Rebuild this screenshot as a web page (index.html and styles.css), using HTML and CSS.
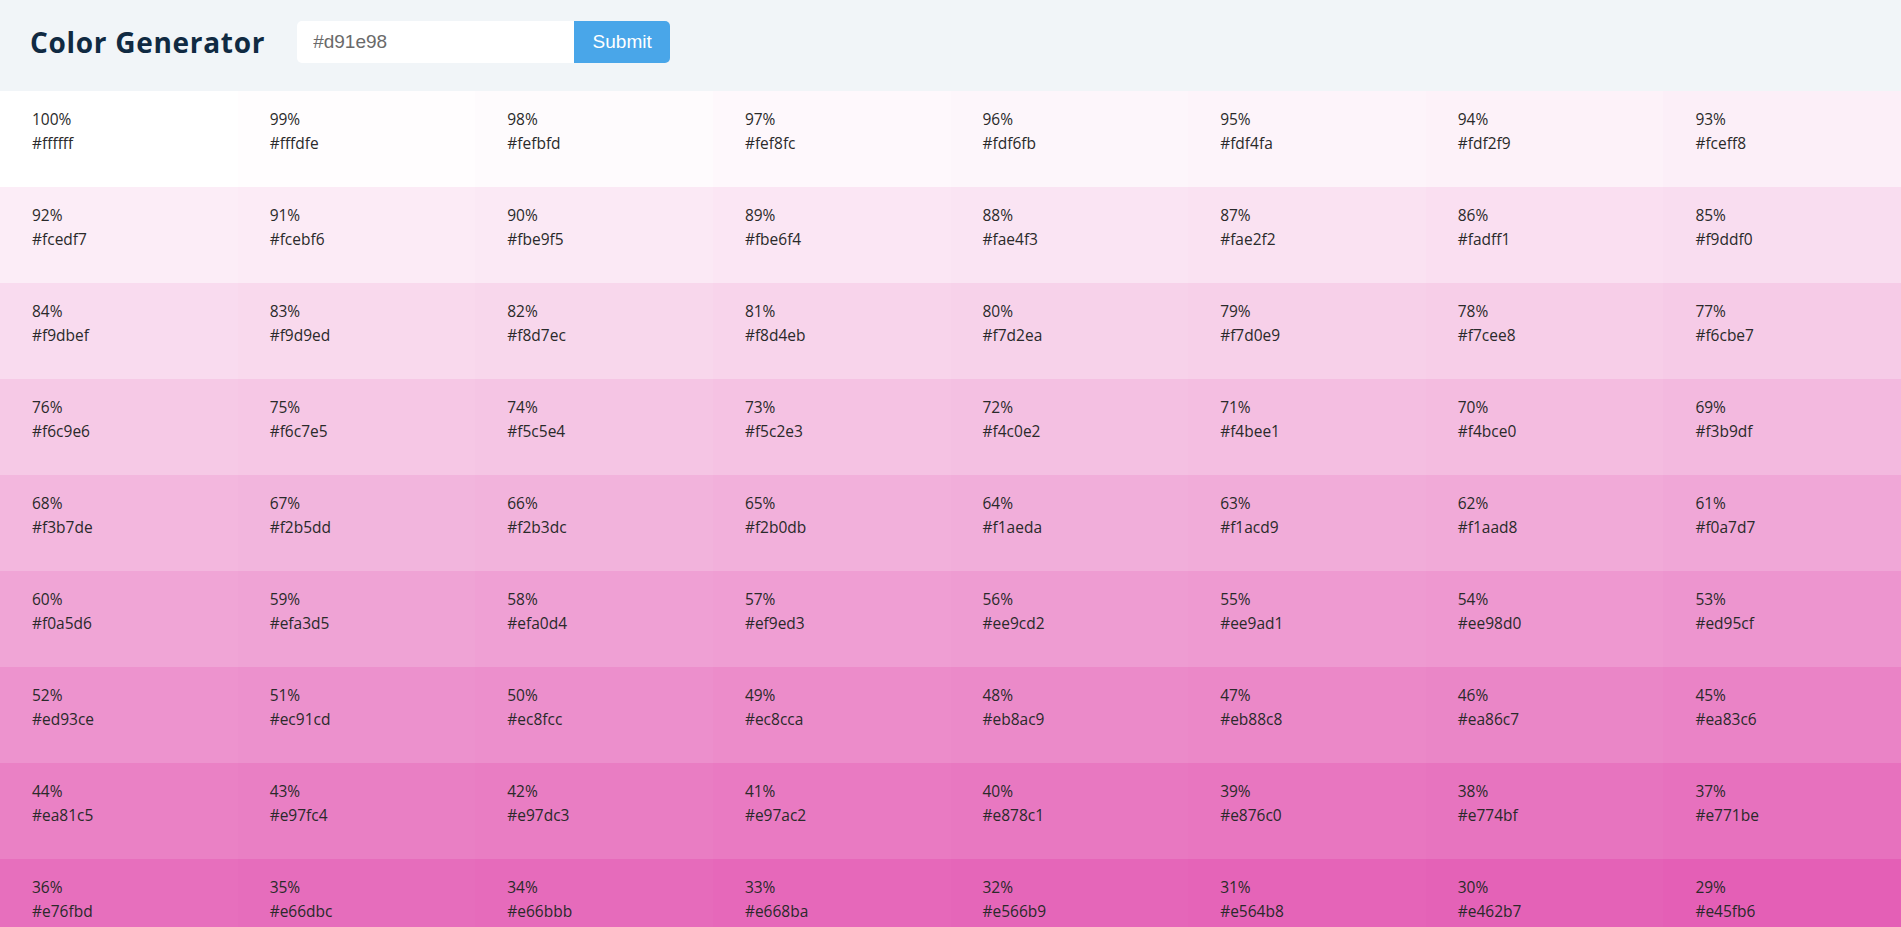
FILE: index.html
```html
<!DOCTYPE html>
<html lang="en">
<head>
<meta charset="utf-8">
<title>Color Generator</title>
<link rel="stylesheet" href="styles.css">
</head>
<body>
<section class="header">
  <h3 class="title">Color Generator</h3>
  <form class="form">
    <input class="color-input" type="text" value="#d91e98">
    <button class="btn" type="button">Submit</button>
  </form>
</section>
<section class="colors">
  <article class="color" style="background:#ffffff"><p class="pct">100%</p><p class="hex">#ffffff</p></article>
  <article class="color" style="background:#fffdfe"><p class="pct">99%</p><p class="hex">#fffdfe</p></article>
  <article class="color" style="background:#fefbfd"><p class="pct">98%</p><p class="hex">#fefbfd</p></article>
  <article class="color" style="background:#fef8fc"><p class="pct">97%</p><p class="hex">#fef8fc</p></article>
  <article class="color" style="background:#fdf6fb"><p class="pct">96%</p><p class="hex">#fdf6fb</p></article>
  <article class="color" style="background:#fdf4fa"><p class="pct">95%</p><p class="hex">#fdf4fa</p></article>
  <article class="color" style="background:#fdf2f9"><p class="pct">94%</p><p class="hex">#fdf2f9</p></article>
  <article class="color" style="background:#fceff8"><p class="pct">93%</p><p class="hex">#fceff8</p></article>

  <article class="color" style="background:#fcedf7"><p class="pct">92%</p><p class="hex">#fcedf7</p></article>
  <article class="color" style="background:#fcebf6"><p class="pct">91%</p><p class="hex">#fcebf6</p></article>
  <article class="color" style="background:#fbe9f5"><p class="pct">90%</p><p class="hex">#fbe9f5</p></article>
  <article class="color" style="background:#fbe6f4"><p class="pct">89%</p><p class="hex">#fbe6f4</p></article>
  <article class="color" style="background:#fae4f3"><p class="pct">88%</p><p class="hex">#fae4f3</p></article>
  <article class="color" style="background:#fae2f2"><p class="pct">87%</p><p class="hex">#fae2f2</p></article>
  <article class="color" style="background:#fadff1"><p class="pct">86%</p><p class="hex">#fadff1</p></article>
  <article class="color" style="background:#f9ddf0"><p class="pct">85%</p><p class="hex">#f9ddf0</p></article>

  <article class="color" style="background:#f9dbef"><p class="pct">84%</p><p class="hex">#f9dbef</p></article>
  <article class="color" style="background:#f9d9ed"><p class="pct">83%</p><p class="hex">#f9d9ed</p></article>
  <article class="color" style="background:#f8d7ec"><p class="pct">82%</p><p class="hex">#f8d7ec</p></article>
  <article class="color" style="background:#f8d4eb"><p class="pct">81%</p><p class="hex">#f8d4eb</p></article>
  <article class="color" style="background:#f7d2ea"><p class="pct">80%</p><p class="hex">#f7d2ea</p></article>
  <article class="color" style="background:#f7d0e9"><p class="pct">79%</p><p class="hex">#f7d0e9</p></article>
  <article class="color" style="background:#f7cee8"><p class="pct">78%</p><p class="hex">#f7cee8</p></article>
  <article class="color" style="background:#f6cbe7"><p class="pct">77%</p><p class="hex">#f6cbe7</p></article>

  <article class="color" style="background:#f6c9e6"><p class="pct">76%</p><p class="hex">#f6c9e6</p></article>
  <article class="color" style="background:#f6c7e5"><p class="pct">75%</p><p class="hex">#f6c7e5</p></article>
  <article class="color" style="background:#f5c5e4"><p class="pct">74%</p><p class="hex">#f5c5e4</p></article>
  <article class="color" style="background:#f5c2e3"><p class="pct">73%</p><p class="hex">#f5c2e3</p></article>
  <article class="color" style="background:#f4c0e2"><p class="pct">72%</p><p class="hex">#f4c0e2</p></article>
  <article class="color" style="background:#f4bee1"><p class="pct">71%</p><p class="hex">#f4bee1</p></article>
  <article class="color" style="background:#f4bce0"><p class="pct">70%</p><p class="hex">#f4bce0</p></article>
  <article class="color" style="background:#f3b9df"><p class="pct">69%</p><p class="hex">#f3b9df</p></article>

  <article class="color" style="background:#f3b7de"><p class="pct">68%</p><p class="hex">#f3b7de</p></article>
  <article class="color" style="background:#f2b5dd"><p class="pct">67%</p><p class="hex">#f2b5dd</p></article>
  <article class="color" style="background:#f2b3dc"><p class="pct">66%</p><p class="hex">#f2b3dc</p></article>
  <article class="color" style="background:#f2b0db"><p class="pct">65%</p><p class="hex">#f2b0db</p></article>
  <article class="color" style="background:#f1aeda"><p class="pct">64%</p><p class="hex">#f1aeda</p></article>
  <article class="color" style="background:#f1acd9"><p class="pct">63%</p><p class="hex">#f1acd9</p></article>
  <article class="color" style="background:#f1aad8"><p class="pct">62%</p><p class="hex">#f1aad8</p></article>
  <article class="color" style="background:#f0a7d7"><p class="pct">61%</p><p class="hex">#f0a7d7</p></article>

  <article class="color" style="background:#f0a5d6"><p class="pct">60%</p><p class="hex">#f0a5d6</p></article>
  <article class="color" style="background:#efa3d5"><p class="pct">59%</p><p class="hex">#efa3d5</p></article>
  <article class="color" style="background:#efa0d4"><p class="pct">58%</p><p class="hex">#efa0d4</p></article>
  <article class="color" style="background:#ef9ed3"><p class="pct">57%</p><p class="hex">#ef9ed3</p></article>
  <article class="color" style="background:#ee9cd2"><p class="pct">56%</p><p class="hex">#ee9cd2</p></article>
  <article class="color" style="background:#ee9ad1"><p class="pct">55%</p><p class="hex">#ee9ad1</p></article>
  <article class="color" style="background:#ee98d0"><p class="pct">54%</p><p class="hex">#ee98d0</p></article>
  <article class="color" style="background:#ed95cf"><p class="pct">53%</p><p class="hex">#ed95cf</p></article>

  <article class="color" style="background:#ed93ce"><p class="pct">52%</p><p class="hex">#ed93ce</p></article>
  <article class="color" style="background:#ec91cd"><p class="pct">51%</p><p class="hex">#ec91cd</p></article>
  <article class="color" style="background:#ec8fcc"><p class="pct">50%</p><p class="hex">#ec8fcc</p></article>
  <article class="color" style="background:#ec8cca"><p class="pct">49%</p><p class="hex">#ec8cca</p></article>
  <article class="color" style="background:#eb8ac9"><p class="pct">48%</p><p class="hex">#eb8ac9</p></article>
  <article class="color" style="background:#eb88c8"><p class="pct">47%</p><p class="hex">#eb88c8</p></article>
  <article class="color" style="background:#ea86c7"><p class="pct">46%</p><p class="hex">#ea86c7</p></article>
  <article class="color" style="background:#ea83c6"><p class="pct">45%</p><p class="hex">#ea83c6</p></article>

  <article class="color" style="background:#ea81c5"><p class="pct">44%</p><p class="hex">#ea81c5</p></article>
  <article class="color" style="background:#e97fc4"><p class="pct">43%</p><p class="hex">#e97fc4</p></article>
  <article class="color" style="background:#e97dc3"><p class="pct">42%</p><p class="hex">#e97dc3</p></article>
  <article class="color" style="background:#e97ac2"><p class="pct">41%</p><p class="hex">#e97ac2</p></article>
  <article class="color" style="background:#e878c1"><p class="pct">40%</p><p class="hex">#e878c1</p></article>
  <article class="color" style="background:#e876c0"><p class="pct">39%</p><p class="hex">#e876c0</p></article>
  <article class="color" style="background:#e774bf"><p class="pct">38%</p><p class="hex">#e774bf</p></article>
  <article class="color" style="background:#e771be"><p class="pct">37%</p><p class="hex">#e771be</p></article>

  <article class="color" style="background:#e76fbd"><p class="pct">36%</p><p class="hex">#e76fbd</p></article>
  <article class="color" style="background:#e66dbc"><p class="pct">35%</p><p class="hex">#e66dbc</p></article>
  <article class="color" style="background:#e66bbb"><p class="pct">34%</p><p class="hex">#e66bbb</p></article>
  <article class="color" style="background:#e668ba"><p class="pct">33%</p><p class="hex">#e668ba</p></article>
  <article class="color" style="background:#e566b9"><p class="pct">32%</p><p class="hex">#e566b9</p></article>
  <article class="color" style="background:#e564b8"><p class="pct">31%</p><p class="hex">#e564b8</p></article>
  <article class="color" style="background:#e462b7"><p class="pct">30%</p><p class="hex">#e462b7</p></article>
  <article class="color" style="background:#e45fb6"><p class="pct">29%</p><p class="hex">#e45fb6</p></article>
</section>
</body>
</html>
```
FILE: styles.css
```css
html {
  scrollbar-width: none;
}
* {
  box-sizing: border-box;
}
body {
  margin: 0;
  font-family: "Open Sans", "Noto Sans", sans-serif;
  background: #ffffff;
  color: #222222;
}
.header {
  display: flex;
  align-items: center;
  height: 91px;
  padding: 0 0 8px 30px;
  background: #f1f5f8;
}
.title {
  margin: 0 32px 0 0;
  font-family: "Open Sans", sans-serif;
  font-size: 28px;
  font-weight: 700;
  letter-spacing: 0.7px;
  color: #102a42;
}
.form {
  display: flex;
  margin: 0;
}
.color-input {
  width: 277px;
  height: 42px;
  padding: 0 16px;
  border: none;
  border-radius: 5px 0 0 5px;
  background: #ffffff;
  font-family: "Liberation Sans", Arial, sans-serif;
  font-size: 19px;
  color: #6a6a6a;
  outline: none;
}
.btn {
  width: 96px;
  height: 42px;
  padding: 0;
  border: none;
  border-radius: 0 5px 5px 0;
  background: #49a6e9;
  font-family: "Liberation Sans", Arial, sans-serif;
  font-size: 19px;
  color: #ffffff;
  cursor: pointer;
}
.colors {
  display: grid;
  grid-template-columns: repeat(8, 1fr);
  grid-auto-rows: 96px;
}
.color {
  padding: 16px 32px 0;
  font-size: 15.5px;
  line-height: 24px;
}
.color p {
  margin: 0;
  color: #2a2a2a;
}
```
